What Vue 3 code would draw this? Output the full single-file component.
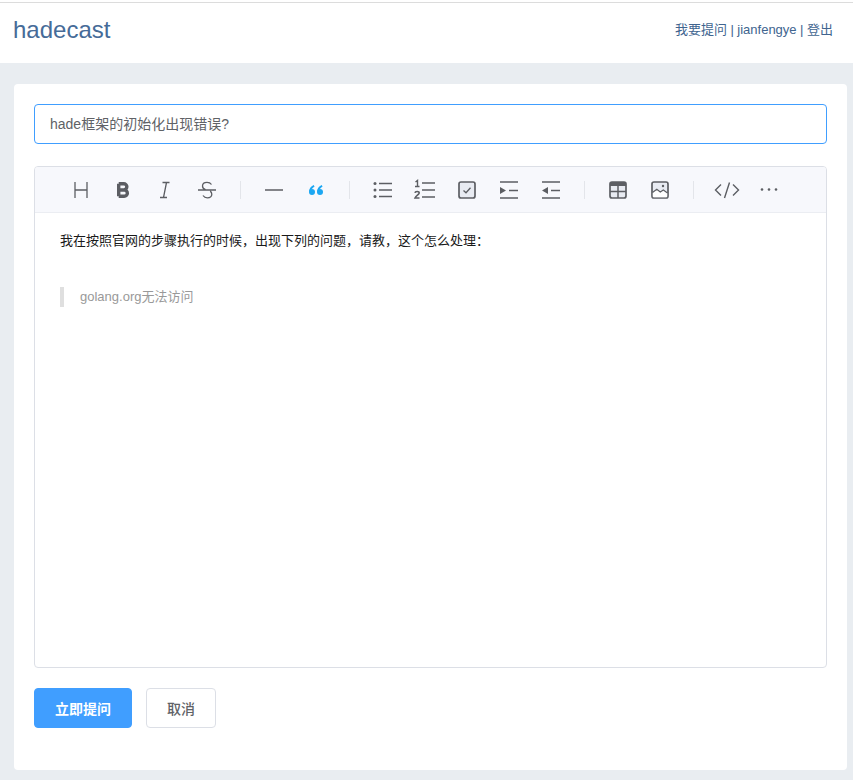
<template>
  <div class="page">
    <header class="top">
      <div class="logo">hadecast</div>
      <nav class="links">
        <a>我要提问</a>
        <span class="bar">|</span>
        <a>jianfengye</a>
        <span class="bar">|</span>
        <a>登出</a>
      </nav>
    </header>

    <main class="card">
      <div class="title-input">{{ title }}</div>

      <section class="editor">
        <div class="toolbar">
          <template v-for="(group, g) in toolbar" :key="g">
            <i v-if="g > 0" class="sep"></i>
            <button v-for="icon in group" :key="icon" class="tool" type="button">
              <svg width="26" height="26" viewBox="0 0 26 26" fill="none" stroke="#5c5e63" stroke-width="1.3">
                <!-- heading -->
                <path v-if="icon === 'h'" d="M7 5v16M19 5v16M7 13h12" />
                <!-- bold -->
                <path v-else-if="icon === 'b'" stroke-width="3.4" stroke-linejoin="round" d="M8.700 6.700v12.600M8.700 6.700h5a3.150 3.150 0 0 1 0 6.300h-5M8.700 13h5.500a3.150 3.150 0 0 1 0 6.300h-5.500" />
                <!-- italic -->
                <path v-else-if="icon === 'i'" d="M10.500 5.500h7M8 20.500h7M14.500 5.500l-3 15" />
                <!-- strike -->
                <path v-else-if="icon === 's'" d="M4 13h18M17.500 7.500c-1-1.500-2.600-2.200-4.500-2.200-2.600 0-4.500 1.400-4.500 3.600 0 1.700 1 3 3 3.700M9 18.500c1 1.500 2.400 2.300 4.300 2.300 2.700 0 4.500-1.400 4.500-3.500 0-1.300-.5-2.400-1.600-3.200" />
                <!-- divider -->
                <path v-else-if="icon === 'hr'" stroke-width="1.600" d="M4 13h18" />
                <!-- quote -->
                <g v-else-if="icon === 'quote'" fill="#1ca7f2" stroke="none">
                  <path d="M6 15c0-3 1.800-5.800 4.600-7l1 1.500c-1.500 1-2.300 1.900-2.600 2.600z" />
                  <circle cx="9" cy="15" r="3" />
                  <path d="M14 15c0-3 1.800-5.800 4.600-7l1 1.500c-1.500 1-2.300 1.900-2.600 2.600z" />
                  <circle cx="17" cy="15" r="3" />
                </g>
                <!-- bullet list -->
                <g v-else-if="icon === 'ul'">
                  <path stroke-width="1.500" d="M9 6.500h13M9 13h13M9 19.500h13" />
                  <circle cx="5" cy="6.500" r="1.500" fill="#5c5e63" stroke="none" />
                  <circle cx="5" cy="13" r="1.500" fill="#5c5e63" stroke="none" />
                  <circle cx="5" cy="19.500" r="1.500" fill="#5c5e63" stroke="none" />
                </g>
                <!-- ordered list -->
                <g v-else-if="icon === 'ol'">
                  <path stroke-width="1.500" d="M10 6h13M10 13h13M10 20h13" />
                  <path stroke-width="1.400" d="M3.500 5 5.500 3.500v6M3 9.500h4.500" />
                  <path stroke-width="1.600" d="M3 15.800c.2-1.800 4.200-1.800 4.200.2 0 1.600-3.200 2.600-4.200 5h4.500" />
                </g>
                <!-- checkbox -->
                <g v-else-if="icon === 'check'">
                  <rect x="5" y="5" width="16" height="16" rx="2" fill="#e8ebf2" stroke-width="1.700" />
                  <path stroke-width="1.300" d="M9.500 13.500l2.500 2.300 4.500-5" />
                </g>
                <!-- indent -->
                <g v-else-if="icon === 'indent'">
                  <path stroke-width="1.500" d="M4 5h18M13 13.500h9M4 21h18" />
                  <path fill="#5c5e63" stroke="none" d="M4 10l6 3.500-6 3.500z" />
                </g>
                <!-- outdent -->
                <g v-else-if="icon === 'outdent'">
                  <path stroke-width="1.500" d="M4 5h18M13 13.500h9M4 21h18" />
                  <path fill="#5c5e63" stroke="none" d="M10 10l-6 3.500 6 3.500z" />
                </g>
                <!-- table -->
                <g v-else-if="icon === 'table'">
                  <rect x="5" y="5" width="16" height="16" rx="2" fill="#e8ebf2" stroke-width="1.700" />
                  <path fill="#5c5e63" stroke="none" d="M5 5h16v4H5z" />
                  <path stroke-width="1.500" d="M13 9v12M5 14.500h16" />
                </g>
                <!-- image -->
                <g v-else-if="icon === 'image'">
                  <rect x="5" y="5" width="16" height="16" rx="2" fill="#e8ebf2" stroke-width="1.700" />
                  <path fill="#fff" stroke="none" d="M5.800 15.500l4-3.300 3.500 2.800 3-2 3.900 3V20.200H5.800z" />
                  <path stroke-width="1.100" d="M5.500 15.500l4.300-3.300 3.500 2.800 3-2 4.200 3" />
                  <circle cx="16" cy="9" r="1.200" fill="#5c5e63" stroke="none" />
                </g>
                <!-- code -->
                <g v-else-if="icon === 'code'">
                  <path stroke-width="1.400" d="M7 7.500 1.500 13 7 18.500M19 7.500 24.500 13 19 18.500M15.500 5.500l-5 15.500" />
                </g>
                <!-- more -->
                <g v-else fill="#5c5e63" stroke="none">
                  <circle cx="6" cy="12.500" r="1.300" />
                  <circle cx="13" cy="12.500" r="1.300" />
                  <circle cx="20" cy="12.500" r="1.300" />
                </g>
              </svg>
            </button>
          </template>
        </div>

        <div class="content">
          <p class="para">{{ body }}</p>
          <blockquote class="quote">{{ quote }}</blockquote>
        </div>
      </section>

      <div class="actions">
        <button class="btn primary" type="button">立即提问</button>
        <button class="btn" type="button">取消</button>
      </div>
    </main>
  </div>
</template>

<script setup>
const title = 'hade框架的初始化出现错误?'
const body = '我在按照官网的步骤执行的时候，出现下列的问题，请教，这个怎么处理：'
const quote = 'golang.org无法访问'

const toolbar = [
  ['h', 'b', 'i', 's'],
  ['hr', 'quote'],
  ['ul', 'ol', 'check', 'indent', 'outdent'],
  ['table', 'image'],
  ['code', 'more'],
]
</script>

<style scoped>
.page {
  min-height: 780px;
  background: #e9edf1;
  font-family: "Liberation Sans", "Noto Sans CJK SC", sans-serif;
}
.top {
  box-sizing: border-box;
  height: 63px;
  padding: 2px 20px 0 13px;
  background: #fff;
  display: flex;
  justify-content: space-between;
  align-items: center;
  position: relative;
}
.top::before {
  content: "";
  position: absolute;
  left: 0;
  right: 0;
  top: 2px;
  height: 1px;
  background: #dcdcdc;
}
.logo {
  font-size: 24px;
  line-height: 28px;
  color: #466b98;
  margin-top: -6px;
}
.links {
  font-size: 13px;
  line-height: 18px;
  color: #40648f;
  margin-top: -6px;
  display: flex;
  gap: 3.500px;
}
.card {
  box-sizing: border-box;
  width: 833px;
  height: 686px;
  margin: 21px 0 0 14px;
  padding: 20px;
  background: #fff;
  border-radius: 4px;
}
.title-input {
  box-sizing: border-box;
  width: 793px;
  height: 40px;
  padding: 0 15px;
  border: 1px solid #409eff;
  border-radius: 4px;
  font-size: 14px;
  line-height: 38px;
  color: #606266;
}
.editor {
  box-sizing: border-box;
  width: 793px;
  height: 502px;
  margin-top: 22px;
  border: 1px solid #dcdfe6;
  border-radius: 4px;
  overflow: hidden;
}
.toolbar {
  box-sizing: border-box;
  height: 46px;
  padding-left: 33px;
  background: #f7f8fc;
  border-bottom: 1px solid #ebedf2;
  display: flex;
  align-items: center;
  gap: 16px;
}
.tool {
  width: 26px;
  height: 26px;
  padding: 0;
  border: 0;
  background: none;
  display: block;
}
.tool svg {
  display: block;
}
.sep {
  width: 1px;
  height: 18px;
  margin: 0 4px;
  background: #e3e5ea;
}
.content {
  padding: 18px 25px;
}
.para {
  margin: 0;
  font-size: 13px;
  line-height: 20px;
  color: #1a1a1a;
}
.quote {
  margin: 36px 0 0;
  padding-left: 16px;
  border-left: 4px solid #dfdfdf;
  font-size: 13px;
  line-height: 20px;
  color: #999;
}
.actions {
  display: flex;
  gap: 14px;
  margin-top: 20px;
}
.btn {
  box-sizing: border-box;
  width: 70px;
  height: 40px;
  padding: 0;
  background: #fff;
  border: 1px solid #dcdfe6;
  border-radius: 4px;
  font-family: inherit;
  font-size: 14px;
  font-weight: 500;
  color: #606266;
}
.btn.primary {
  width: 98px;
  background: #409eff;
  border-color: #409eff;
  color: #fff;
  font-weight: 700;
}
</style>
